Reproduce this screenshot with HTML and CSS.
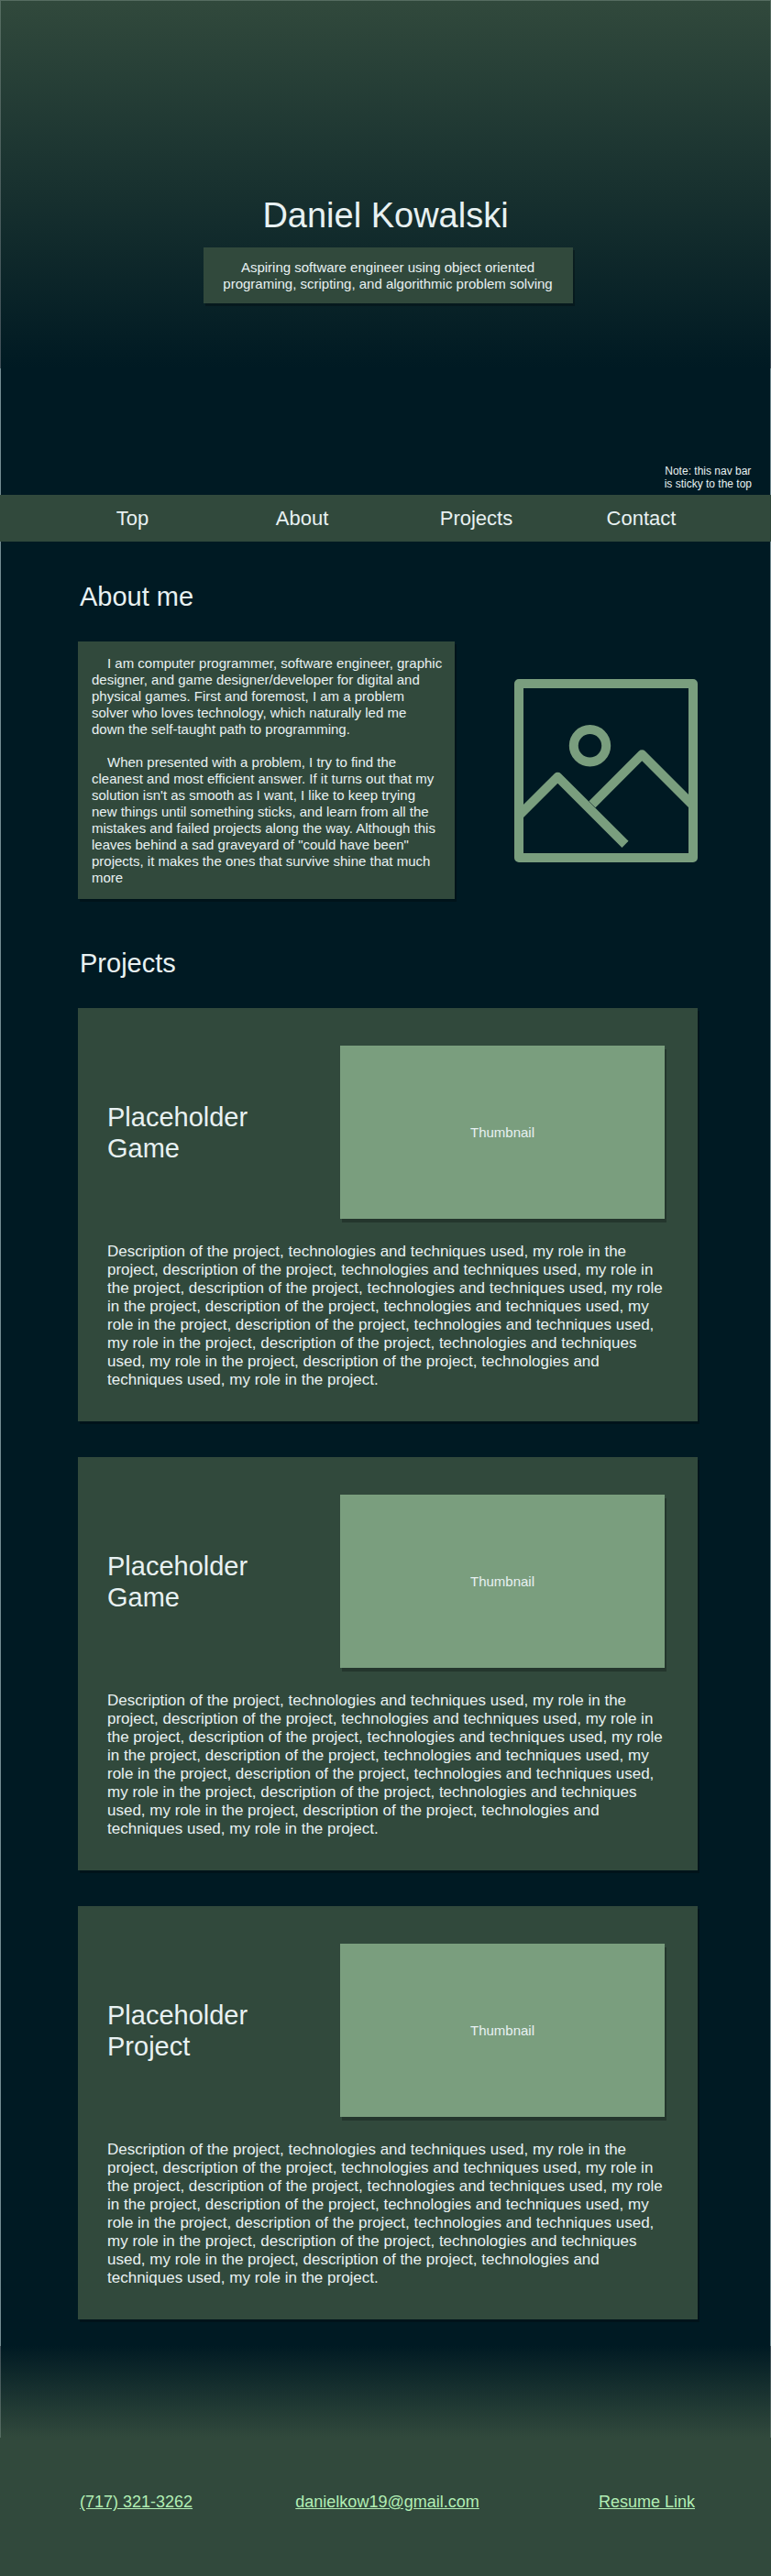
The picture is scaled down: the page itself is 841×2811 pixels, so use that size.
FILE: index.html
```
<!DOCTYPE html>
<html lang="en">
<head>
<meta charset="utf-8">
<title>Daniel Kowalski</title>
<link rel="stylesheet" href="styles.css">
</head>
<body>
<header class="hero" id="top">
  <h1 class="name">Daniel Kowalski</h1>
  <p class="tagline">Aspiring software engineer using object oriented<br>programing, scripting, and algorithmic problem solving</p>
  <p class="note">Note: this nav bar<br>is sticky to the top</p>
</header>
<nav class="nav">
  <a class="nav-link" href="#top">Top</a>
  <a class="nav-link" href="#about">About</a>
  <a class="nav-link" href="#projects">Projects</a>
  <a class="nav-link" href="#contact">Contact</a>
</nav>
<main class="main">
  <h2 class="heading" id="about">About me</h2>
  <section class="about">
    <div class="bio">
      <p>I am computer programmer, software engineer, graphic designer, and game designer/developer for digital and physical games. First and foremost, I am a problem solver who loves technology, which naturally led me down the self-taught path to programming.</p>
      <p>When presented with a problem, I try to find the cleanest and most efficient answer. If it turns out that my solution isn't as smooth as I want, I like to keep trying new things until something sticks, and learn from all the mistakes and failed projects along the way. Although this leaves behind a sad graveyard of "could have been" projects, it makes the ones that survive shine that much more</p>
    </div>
    <svg class="picture" viewBox="0 0 200 200" fill="none" stroke="currentColor" stroke-width="10" stroke-linejoin="round">
      <rect x="5" y="5" width="190" height="190"/>
      <circle cx="82.5" cy="72.800" r="17.7"/>
      <path d="M5 149 47.300 106.700 121 180.400M85 136.700 139.300 82.300 195 138"/>
    </svg>
  </section>
  <h2 class="heading projects-heading" id="projects">Projects</h2>
  <section class="projects">
    <article class="card">
      <div class="card-top"><h3 class="card-title">Placeholder Game</h3><div class="thumb">Thumbnail</div></div>
      <p class="desc">Description of the project, technologies and techniques used, my role in the project, description of the project, technologies and techniques used, my role in the project, description of the project, technologies and techniques used, my role in the project, description of the project, technologies and techniques used, my role in the project, description of the project, technologies and techniques used, my role in the project, description of the project, technologies and techniques used, my role in the project, description of the project, technologies and techniques used, my role in the project.</p>
    </article>
    <article class="card">
      <div class="card-top"><h3 class="card-title">Placeholder Game</h3><div class="thumb">Thumbnail</div></div>
      <p class="desc">Description of the project, technologies and techniques used, my role in the project, description of the project, technologies and techniques used, my role in the project, description of the project, technologies and techniques used, my role in the project, description of the project, technologies and techniques used, my role in the project, description of the project, technologies and techniques used, my role in the project, description of the project, technologies and techniques used, my role in the project, description of the project, technologies and techniques used, my role in the project.</p>
    </article>
    <article class="card">
      <div class="card-top"><h3 class="card-title">Placeholder Project</h3><div class="thumb">Thumbnail</div></div>
      <p class="desc">Description of the project, technologies and techniques used, my role in the project, description of the project, technologies and techniques used, my role in the project, description of the project, technologies and techniques used, my role in the project, description of the project, technologies and techniques used, my role in the project, description of the project, technologies and techniques used, my role in the project, description of the project, technologies and techniques used, my role in the project, description of the project, technologies and techniques used, my role in the project.</p>
    </article>
  </section>
</main>
<div class="fade"></div>
<footer class="footer" id="contact">
  <a class="contact" href="tel:7173213262">(717) 321-3262</a>
  <a class="contact email" href="mailto:danielkow19@gmail.com">danielkow19@gmail.com</a>
  <a class="contact" href="#resume">Resume Link</a>
</footer>
</body>
</html>
```
FILE: styles.css
```
* { box-sizing: border-box; margin: 0; padding: 0; }
body {
  background: #001a23;
  color: #e8f1f2;
  font-family: "Liberation Sans", Arial, sans-serif;
  font-size: 15px;
  line-height: 18px;
}
h1, h2, h3 { font-weight: 400; }
.hero {
  position: relative;
  height: 540px;
  padding-top: 212px;
  border: 1px solid;
  border-image: linear-gradient(#566c61 0, #405059 401px, #738c92 401px) 1;
  border-width: 1px 1px 0;
  background: linear-gradient(#31493c 0, #001a23 400px);
  display: flex;
  flex-direction: column;
  align-items: center;
}
.name { font-size: 38px; line-height: 44px; }
.tagline {
  width: 403px;
  height: 61px;
  margin: 11px 0 0 5px;
  padding-top: 13px;
  text-align: center;
  background: #31493c;
  box-shadow: 2px 3px 0 rgba(0, 0, 0, .25);
}
.name + .tagline { margin-top: 13px; }
.note {
  position: absolute;
  right: 20px;
  bottom: 5px;
  font-size: 12px;
  line-height: 14px;
  text-align: center;
}
.nav {
  position: sticky;
  top: 0;
  z-index: 1;
  height: 51px;
  padding: 0 51px;
  display: grid;
  grid-template-columns: 187px 183px 197px 163px;
  align-items: center;
  text-align: center;
  background: #31493c;
}
.nav-link { color: inherit; font-size: 22px; line-height: 26px; text-decoration: none; }
.main {
  height: 1969px;
  padding: 43px 79px 0 84px;
  border: solid #738c92;
  border-width: 0 1px;
}
.heading { padding-left: 2px; font-size: 29px; line-height: 34px; }
.about { display: flex; justify-content: space-between; align-items: center; margin-top: 32px; }
.bio {
  width: 411px;
  height: 281px;
  padding: 15px 13px 0 15px;
  background: #31493c;
  box-shadow: 2px 3px 0 rgba(0, 0, 0, .25);
}
.bio p { text-indent: 17px; }
.bio p + p { margin-top: 18px; }
.picture { width: 200px; height: 200px; margin-right: .5px; color: #7a9e7e; }
.projects-heading { margin-top: 53px; }
.projects { display: grid; gap: 39px; margin-top: 32px; }
.card {
  height: 451px;
  padding: 41px 36px 0 32px;
  background: #31493c;
  box-shadow: 2px 3px 0 rgba(0, 0, 0, .25);
}
.card-top { display: flex; justify-content: space-between; align-items: center; }
.card-title { width: 190px; font-size: 29px; line-height: 34px; }
.thumb {
  width: 354px;
  height: 189px;
  display: grid;
  place-items: center;
  background: #7a9e7e;
  box-shadow: 2px 4px 0 rgba(0, 0, 0, .25);
}
.desc { margin-top: 26px; font-size: 17px; line-height: 20px; }
.fade {
  height: 100px;
  background: linear-gradient(#001a23, #31493c);
  border: 1px solid;
  border-width: 0 1px;
  border-image: linear-gradient(#405059, #566c61) 1;
}
.footer {
  height: 151px;
  padding: 60px 83px 0 87px;
  display: flex;
  justify-content: space-between;
  background: #31493c;
}
.contact { color: #b2eeb4; font-size: 18px; line-height: 20px; }
.email { margin-right: 18px; }
```
